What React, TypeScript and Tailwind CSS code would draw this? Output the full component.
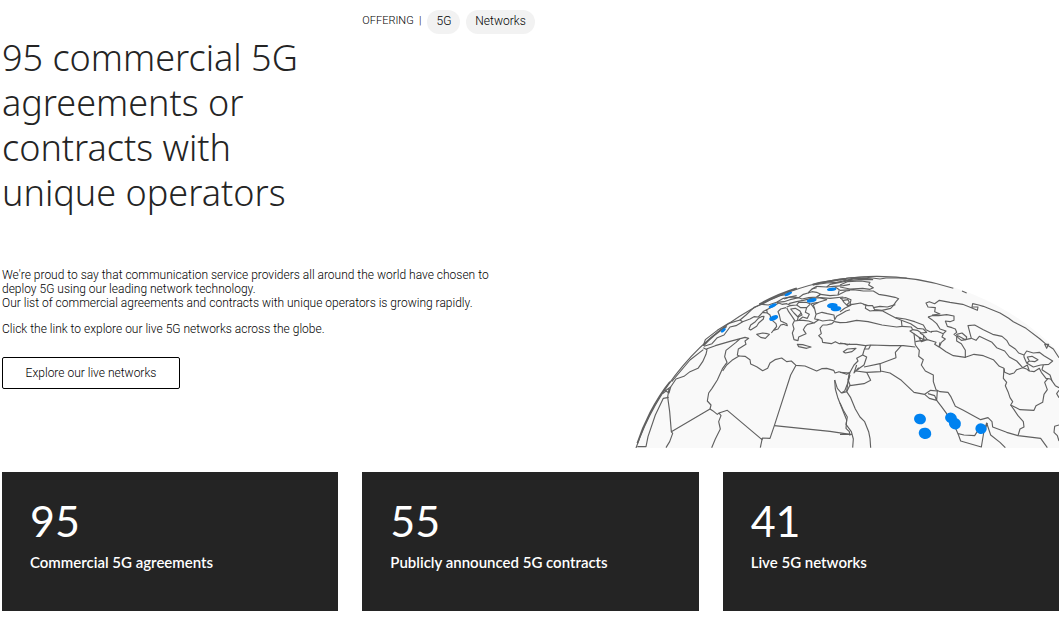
/**
 * Landing section for the 5G contracts page: headline, intro copy,
 * globe illustration and the three headline numbers.
 */

const TAGS = [
  { label: '5G', href: '#5g' },
  { label: 'Networks', href: '#networks' },
] as const

const STATS = [
  { value: '95', label: 'Commercial 5G agreements' },
  { value: '55', label: 'Publicly announced 5G contracts' },
  { value: '41', label: 'Live 5G networks' },
] as const

// Borders and coastlines west of the Suez canal
const WEST_LINES = [
  'M22 545 L48 545 L54 515 L76 450 L100 400 L116 397',
  'M98 386 L108 378 L117 384 L122 366 L105 378 M117 372 L113 396 L119 440 L124 500 L240 432 L248 437 L262 448 L267 444 L292 436 L396 524 L397 519 L420 520 L433 482 L482 330 L498 301',
  'M122 366 L138 342 L162 334 L180 320 L204 310 L218 290 L228 268 L231 254 L220 248',
  'M125 350 L180 285 L220 254',
  'M124 500 L128 505 L119 530 L108 548',
  'M267 444 L273 452 L266 470 L271 492 L256 522 L245 548',
  'M397 519 L391 548',
  'M229 252 L256 242 L300 229 L345 217 L356 220 L345 228 L348 238 L325 252 L322 270 L327 273 L306 286 L290 300 L278 318',
  'M329 222 L318 232 L288 256 L284 275 L291 292 L278 310 L262 345 L246 370 L236 384 L232 408 L243 420 L240 432',
  'M327 273 L345 274 L360 284 L362 297 L380 305 L398 317 L413 310 L420 294 L435 284 L455 279 L470 290 L484 288 L498 301 L525 303 L560 318 L575 311 L590 310 L611 316 L615 324 L627 320 L650 328 L660 322',
  'M433 482 L520 491 L600 499 L660 508',
  'M614 345 L616 372 L624 400 L640 440 L650 465 L648 490 L658 500 L660 512',
  'M614 345 L622 370 L634 384 L644 378 L654 352 L660 330',
  // Iberia and France
  'M220 242 L226 224 L262 196 L296 175 L330 165',
  'M222 244 L246 236 L262 218 L282 210 L300 186 L318 182 L338 170 L330 165 L348 150 L372 127 L396 118',
  'M338 170 L360 162 L372 155 L385 156 L398 142 L412 144 L410 134 L398 140',
  'M396 118 L420 105 L450 92 L470 88 M396 118 L415 120 L440 112 L460 100 L500 92',
  // Corsica, Sardinia, Sicily
  'M357 192 L362 180 L376 170 L385 160 L394 155 L402 154 L400 162 L386 174 L380 184 L362 195 Z',
  'M380 208 L398 204 L412 206 L418 208 L406 220 L392 217 Z',
  // Italy
  'M412 144 L420 150 L424 164 L438 176 L440 184 L432 194 L424 204 M440 184 L432 196 L444 192 L452 180 L460 178 L472 182 L470 176 L452 168 L448 150 L444 140 L452 132 L468 128',
  'M410 134 L430 124 L446 114 L456 118 L470 116 L484 122',
  // Balkans
  'M470 126 L480 122 L500 120 L506 112 L528 112 L544 118 L554 132 L558 148',
  'M470 128 L476 140 L486 154 L494 166 M482 132 L492 144 L504 156 L516 150 L510 138 L496 130 Z',
  'M500 120 L512 128 L530 128 L526 142 L538 148 L532 160 L518 156 L506 166 L494 168 M530 128 L540 118',
  'M494 166 L488 178 L492 192 L487 204 L492 224 L504 227 L506 216 L528 206 L520 194 L526 184 L532 178 L552 174 L536 168 L520 166 L506 166',
  'M502 166 L506 152 L514 144',
  'M502 238 L518 239 L532 243 L543 246 L530 250 L506 245 Z',
  'M552 174 L566 164 L578 168 L600 165 L614 168 L606 176 L590 180 L578 180',
  'M558 148 L576 142 L592 146 L612 150 L614 164 M558 148 L554 162 L566 164',
  'M614 164 L620 154 L634 146 L648 138 L660 134',
  // Turkey
  'M578 180 L570 190 L574 206 L566 212 L576 222 L578 232 L604 236 L616 230 L628 236 L644 236 L652 240 L660 237',
  // Central Europe
  'M468 88 L480 78 L500 70 M462 102 L480 96 L506 98 L520 88 L534 84 L546 72 L560 68',
  'M506 98 L516 102 L536 98 L560 96 L572 88 L560 82 L546 80 L534 84',
  'M476 116 L500 110 L520 106 L544 100 L570 98 L590 104 L566 112 L544 116 M440 112 L462 110 L480 104 L506 98',
  'M570 98 L600 100 L640 96 M572 88 L600 92 L624 90 L648 78 L660 76',
  'M546 72 L560 64 L590 66 L612 64 L640 62 L660 58 M612 64 L628 74 L624 90 M560 96 L572 88 M554 132 L550 120 L566 112',
  'M548 60 L590 54 L620 52 L660 44 M590 66 L600 58 L630 52',
]

// Borders and coastlines from the Black Sea to Central Asia
const EAST_LINES = [
  'M0 45 L24 39 L44 38 L74 36 L120 42 L138 39 L200 39 M0 52 L30 46 L70 44 L98 44 L80 40 L40 41 L10 48',
  'M0 60 L22 50 L64 48 L90 52 L86 60 L100 68 L90 73 L68 70 L30 72 L0 66',
  'M0 76 L40 74 L70 78 L100 78 L116 88 L140 92 L165 97 L176 101 L168 110 L160 122 L152 130 L126 136 L104 134 L98 122 L84 122 L70 118',
  'M100 128 L120 124 L142 126 L166 119',
  'M0 100 L18 98 L33 104 L30 118 L38 118 L62 114 L78 120 L76 130 L90 138 L106 136 L128 138',
  'M4 100 L12 112 L22 122 L32 120 M10 106 L24 104 L28 112 L20 120 M0 140 L14 130 L34 120',
  'M128 138 L146 148 L166 158 L184 166 L186 184 L170 186 L126 180 L84 170 L50 166 L20 172 L0 173 L-16 170',
  'M166 158 L196 162 L224 170 L250 180 L258 194 L270 200 L276 202',
  'M186 184 L214 186 L218 194 L210 198 L222 206 L226 240',
  'M184 166 L212 176 L232 190 L250 192 L260 202 L244 204 L232 196 L218 194',
  'M222 206 L236 216 L252 224 L250 210 L240 204 M250 210 L262 224 L276 228 L288 232 L284 238 L297 246 L300 232 M236 216 L244 230 L262 224 L226 230',
  'M272 200 L290 198 L310 206 L306 216 L316 222 L304 232 L298 246',
  // Caspian sea
  'M264 156 L276 152 L296 152 L320 149 L342 153 L342 166 L330 170 L316 168 L322 184 L336 188 L346 192 L350 202 L342 208 L350 214 L350 228 L364 236 L376 256 L376 278',
  'M264 156 L276 164 L290 176 L300 192 L318 198 L310 206',
  'M350 208 L366 204 L380 216 L378 224 L364 226 L354 218 Z M354 212 L376 224',
  // Kazakhstan
  'M276 150 L300 147 L284 140 L286 128 L264 126 L258 114 L268 110 L284 116 L298 106 L330 112 L368 118 L394 128 L412 136 L414 126 L396 126 L398 116 L416 120 L430 124 L480 144 L506 160 L520 170 L558 190 L600 222 L616 236 L640 252 L657 278',
  'M376 224 L394 220 L384 182 L404 180 L430 194 L458 208 L486 214 L500 226 L508 240 L526 252 L536 264 L552 270',
  'M394 220 L408 226 L418 214 L440 224 L456 232 L470 248 L494 258 L508 276 L530 288 L548 308 L560 312',
  'M298 246 L318 260 L340 272 L376 277 L402 268 L430 272 L460 284 L478 304 L492 310',
  // Kyrgyzstan, Tajikistan
  'M552 270 L560 258 L580 264 L598 262 L612 272 L638 288 L626 298 L602 300 L580 306 L560 294 L552 276 Z',
  'M560 294 L568 288 L562 276 L576 274 L594 284 L584 290 L568 288 M560 312 L568 318 L582 320 L598 310 L604 322 L618 340 L632 342 L646 362 L657 368',
  'M548 308 L562 300 L568 318 M610 300 L606 314 L630 330 L636 348',
  'M614 238 L626 238 L620 250 Z',
  // Afghanistan
  'M492 310 L494 322 L508 328 L522 324 L530 314 L548 308',
  'M492 310 L490 340 L500 352 L496 362 L504 380 L510 398 L518 410 L512 420 L540 434 L582 436 L588 422 L608 412 L612 388 L622 374 L614 352 L624 340',
  'M657 376 L650 386 L657 398 M657 480 L644 484 L642 502 L652 512 L657 528',
  // Iran
  'M226 240 L238 256 L236 274 L250 284 L244 300 L256 318 L280 330 L280 350 L288 374 L300 380 L324 382 L332 394 L346 424 L370 436 L400 452 L422 464 L444 458 L456 470 L458 486 L500 502 L534 512 L602 520 L622 548',
  'M534 512 L540 492 L552 486 L550 470 L534 452 L522 434 L512 420',
  // Levant and Iraq
  'M20 237 L24 238 L50 238 L76 242 L92 240 L150 242 L190 242 L226 246',
  'M78 242 L72 256 L68 270 L50 280 L54 288 L42 300 L30 322 L24 344 L30 360 L20 380 L6 384',
  'M92 240 L86 252 L72 252 M68 270 L80 276 L72 300 L58 310 L48 318 M50 300 L42 324 L56 308 M72 306 L120 296 L168 278 L166 262 L184 242',
  'M120 296 L122 320 L80 322 L92 346 L72 356 L30 362 M80 322 L48 318 M122 318 L150 324 L184 346 L222 382 L254 388 L272 376 L292 378',
  'M254 388 L268 400 L290 406 L284 392 L264 386 M292 378 L290 406',
  'M10 260 L22 252 L48 250 L36 260 L16 264 Z',
  // Gulf and Arabian peninsula
  'M290 406 L304 424 L320 446 L330 470 L346 488 L354 506 L372 510 L404 512 L414 496 L436 492 L442 474',
  'M354 506 L362 528 L424 546 L432 498 L440 474 L446 492 L452 510 L480 532 L496 548',
  // Red Sea
  'M20 237 L0 234 M0 322 L28 324 L20 378 M0 414 L10 436 L22 456 L18 478 L34 500 L40 522 L38 548 M0 508 L38 508',
  'M20 380 L32 398 L46 432 L60 456 L74 470 L86 500 L90 520 L92 548',
]

/** Live networks on the visible side of the globe. */
const MARKERS = [
  { cx: 280, cy: 196, rx: 9, ry: 4, tilt: -38 },
  { cx: 431, cy: 159, rx: 14, ry: 7, tilt: -22 },
  { cx: 428, cy: 122, rx: 13, ry: 5, tilt: -25 },
  { cx: 475, cy: 87, rx: 12, ry: 4, tilt: -24 },
  { cx: 545, cy: 106, rx: 15, ry: 6, tilt: -12 },
  { cx: 605, cy: 73, rx: 14, ry: 5, tilt: -4 },
  { cx: 607, cy: 122, rx: 16, ry: 8, tilt: -4 },
  { cx: 618, cy: 131, rx: 16, ry: 8, tilt: -4 },
  { cx: 870, cy: 462, rx: 18, ry: 16, tilt: 10 },
  { cx: 885, cy: 505, rx: 19, ry: 17, tilt: 10 },
  { cx: 963, cy: 459, rx: 18, ry: 16, tilt: 20 },
  { cx: 975, cy: 476, rx: 18, ry: 17, tilt: 20 },
  { cx: 1053, cy: 491, rx: 17, ry: 16, tilt: 20 },
] as const

function Globe() {
  return (
    <svg viewBox="0 9 1287 540" className="block w-full" role="img" aria-label="Globe with live 5G networks">
      <circle cx="740" cy="794" r="763" fill="#f9f9f9" />
      <g fill="none" stroke="#606060" strokeWidth="3.4" strokeLinejoin="round">
        <path d="M18 549 A763 763 0 0 1 970 70" />
        <path d="M996 78 L1010 84" />
        <path d="M22 535 C40 480 75 405 120 350" strokeWidth="5" />
        <path d="M220 242 C240 220 262 202 290 184" strokeWidth="5" />
        <path d="M388 118 C420 100 460 82 500 70" strokeWidth="6" />
        <path d="M548 59 C570 52 600 48 650 41" strokeWidth="6" />
        {WEST_LINES.map((d) => (
          <path key={d} d={d} />
        ))}
        <g transform="translate(630 0)">
          {EAST_LINES.map((d) => (
            <path key={d} d={d} />
          ))}
        </g>
      </g>
      <g fill="#0082f0">
        {MARKERS.map(({ cx, cy, rx, ry, tilt }) => (
          <ellipse key={`${cx}-${cy}`} cx={cx} cy={cy} rx={rx} ry={ry} transform={`rotate(${tilt} ${cx} ${cy})`} />
        ))}
      </g>
    </svg>
  )
}

export default function App() {
  return (
    <main className="bg-white pt-[10px] pr-[5px] pl-[2px] font-['Lato',sans-serif] text-[#242424]">
      {/* Category tags */}
      <div className="grid grid-cols-3 gap-6">
        <nav
          aria-label="Offering"
          className="col-start-2 flex items-start gap-[6px] font-['Roboto',sans-serif] text-[12px] leading-[22px] font-light text-black"
        >
          <span className="text-[11px]">OFFERING &nbsp;|</span>
          {TAGS.map(({ label, href }) => (
            <a key={href} href={href} className="rounded-full bg-[#f2f2f2] px-[9px] pb-[2px] hover:bg-[#e0e0e0]">
              {label}
            </a>
          ))}
        </nav>
      </div>

      <div className="mt-px grid grid-cols-3 gap-6">
        <h1 className="font-['Noto_Sans',sans-serif] text-[36px] leading-[45px] font-light">
          95 commercial 5G agreements or contracts with unique operators
        </h1>
      </div>

      {/* Intro and globe */}
      <section className="mt-[53px] flex items-start justify-between">
        <div className="w-[490px] font-['Roboto',sans-serif] text-[12px] leading-[14px] font-light text-black">
          <p>
            We're proud to say that communication service providers all around the world have chosen to deploy 5G
            using our leading network technology.
            <br />
            Our list of commercial agreements and contracts with unique operators is growing rapidly.
          </p>
          <p className="mt-3">Click the link to explore our live 5G networks across the globe.</p>
          <button
            type="button"
            className="mt-[21px] h-8 w-[178px] rounded-[2px] border border-black hover:bg-black hover:text-white"
          >
            Explore our live networks
          </button>
        </div>
        <div className="w-[429px]">
          <Globe />
        </div>
      </section>

      {/* Headline numbers */}
      <dl className="mt-6 grid grid-cols-3 gap-6">
        {STATS.map(({ value, label }) => (
          <div key={label} className="flex h-[139px] flex-col-reverse justify-end bg-[#242424] px-7 pt-6 text-white">
            <dt className="text-[15px] leading-6 font-semibold">{label}</dt>
            <dd className="mb-1 text-[43px] leading-[50px]">{value}</dd>
          </div>
        ))}
      </dl>
    </main>
  )
}
